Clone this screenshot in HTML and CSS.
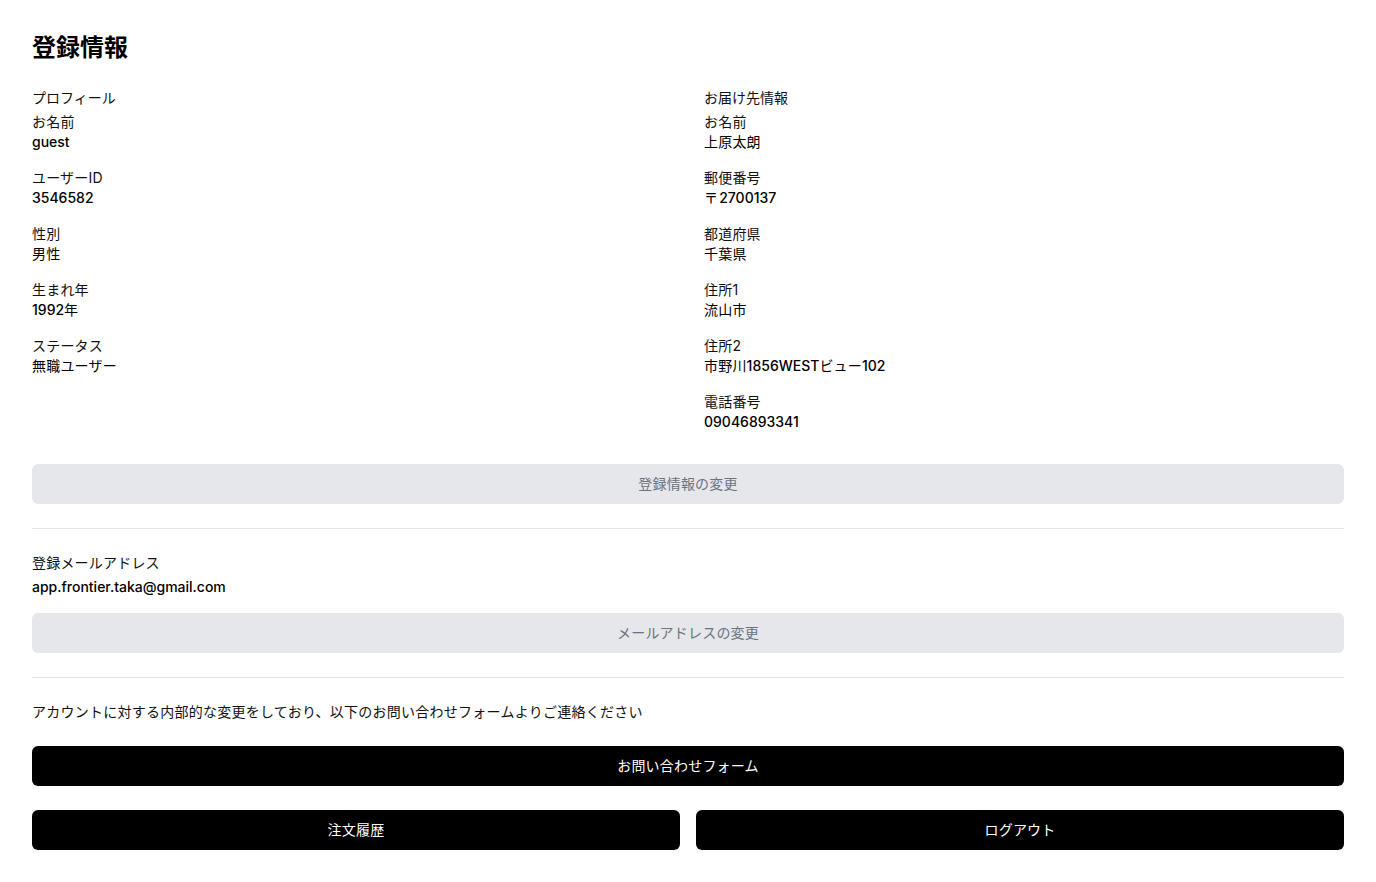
FILE: index.html
```html
<!DOCTYPE html>
<html lang="ja">
<head>
<meta charset="utf-8">
<title>登録情報</title>
<link rel="stylesheet" href="styles.css">
</head>
<body>
<main class="page">
  <h1 class="title">登録情報</h1>
  <div class="grid">
    <section class="col">
      <h2 class="section-title">プロフィール</h2>
      <div class="items">
        <div class="item"><div class="label">お名前</div><div class="value">guest</div></div>
        <div class="item"><div class="label">ユーザーID</div><div class="value">3546582</div></div>
        <div class="item"><div class="label">性別</div><div class="value ja">男性</div></div>
        <div class="item"><div class="label">生まれ年</div><div class="value">1992<span class="ja">年</span></div></div>
        <div class="item"><div class="label">ステータス</div><div class="value ja">無職ユーザー</div></div>
      </div>
    </section>
    <section class="col">
      <h2 class="section-title">お届け先情報</h2>
      <div class="items">
        <div class="item"><div class="label">お名前</div><div class="value ja">上原太朗</div></div>
        <div class="item"><div class="label">郵便番号</div><div class="value"><span class="ja postal">〒</span>2700137</div></div>
        <div class="item"><div class="label">都道府県</div><div class="value ja">千葉県</div></div>
        <div class="item"><div class="label">住所1</div><div class="value ja">流山市</div></div>
        <div class="item"><div class="label">住所2</div><div class="value"><span class="ja">市野川</span>1856WEST<span class="ja">ビュー</span>102</div></div>
        <div class="item"><div class="label">電話番号</div><div class="value">09046893341</div></div>
      </div>
    </section>
  </div>
  <button class="btn btn-gray btn-first">登録情報の変更</button>
  <hr class="divider">
  <div class="email-block">
    <div class="label">登録メールアドレス</div>
    <div class="value">app.frontier.taka@gmail.com</div>
  </div>
  <button class="btn btn-gray">メールアドレスの変更</button>
  <hr class="divider">
  <p class="note">アカウントに対する内部的な変更をしており、以下のお問い合わせフォームよりご連絡ください</p>
  <button class="btn btn-black">お問い合わせフォーム</button>
  <div class="bottom-row">
    <button class="btn btn-black">注文履歴</button>
    <button class="btn btn-black">ログアウト</button>
  </div>
</main>
</body>
</html>
```

FILE: styles.css
```css
* { box-sizing: border-box; }
html, body { margin: 0; padding: 0; background: #fff; }
body {
  font-family: Inter, "Noto Sans CJK JP", sans-serif;
  color: #111;
  font-size: 14px;
  line-height: 20px;
}
.page {
  padding: 32px 32px 32px;
  display: flex;
  flex-direction: column;
}
.title {
  margin: 0 0 24px;
  font-size: 24px;
  line-height: 32px;
  font-weight: 700;
  color: #000;
}
.grid {
  display: grid;
  grid-template-columns: 1fr 1fr;
  column-gap: 32px;
}
.section-title {
  margin: 0 0 4px;
  font-size: 14px;
  line-height: 20px;
  font-weight: 400;
  color: #111;
}
.items {
  display: flex;
  flex-direction: column;
  gap: 16px;
}
.label { color: #111; letter-spacing: 0.2px; }
.value { color: #000; font-weight: 500; }
.ja { font-weight: 400; letter-spacing: 0.2px; }
.postal { margin-right: 1px; }
.btn {
  display: block;
  width: 100%;
  height: 40px;
  border: none;
  border-radius: 6px;
  font-family: Inter, "Noto Sans CJK JP", sans-serif;
  font-size: 14px;
  line-height: 20px;
  letter-spacing: 0.2px;
  padding: 0;
}
.btn-gray { background: #e5e7eb; color: #6b7280; }
.btn-black { background: #000; color: #fff; }
.btn-first { margin-top: 32px; }
.divider {
  margin: 24px 0;
  border: none;
  border-top: 1px solid #e5e7eb;
  height: 0;
}
.email-block {
  display: flex;
  flex-direction: column;
  gap: 4px;
  margin-bottom: 16px;
}
.note { margin: 0 0 24px; color: #111; letter-spacing: 0.25px; }
.bottom-row {
  margin-top: 24px;
  display: grid;
  grid-template-columns: 1fr 1fr;
  column-gap: 16px;
}
```
